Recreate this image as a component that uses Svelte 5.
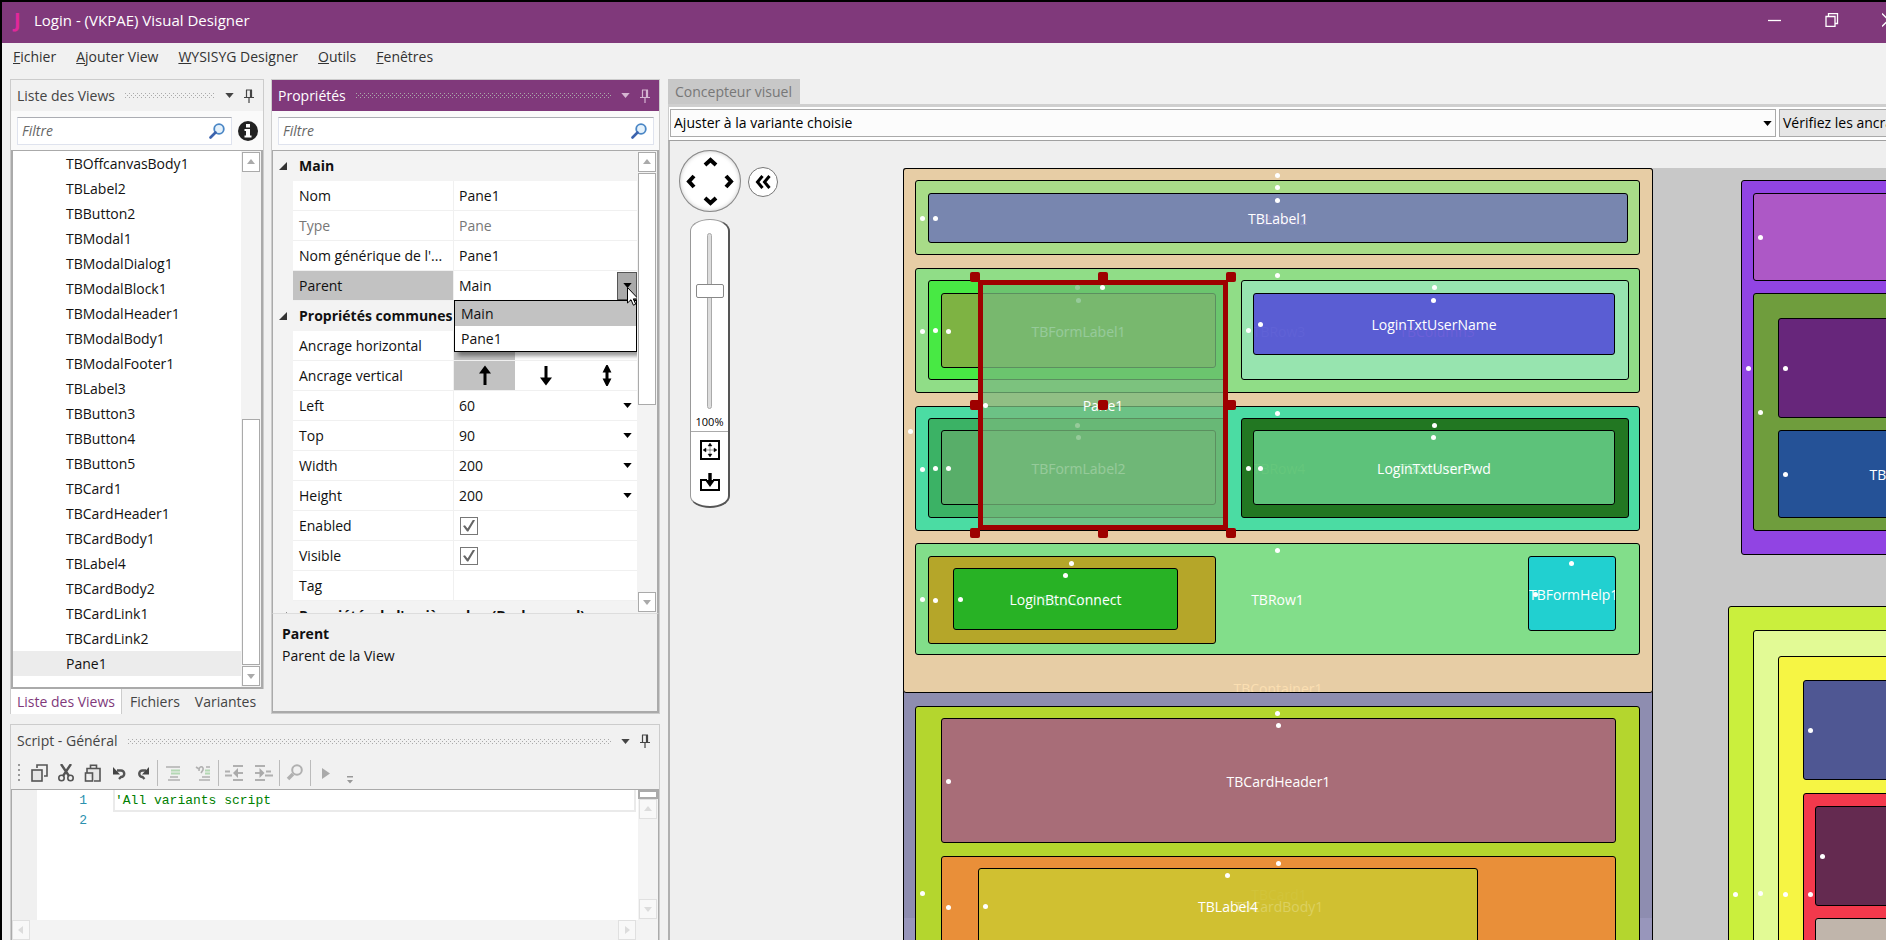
<script>
  const menus = [
    ["F", "ichier"],
    ["A", "jouter View"],
    ["W", "YSISYG Designer"],
    ["O", "utils"],
    ["F", "enêtres"],
  ];

  const views = [
    "TBOffcanvasBody1",
    "TBLabel2",
    "TBButton2",
    "TBModal1",
    "TBModalDialog1",
    "TBModalBlock1",
    "TBModalHeader1",
    "TBModalBody1",
    "TBModalFooter1",
    "TBLabel3",
    "TBButton3",
    "TBButton4",
    "TBButton5",
    "TBCard1",
    "TBCardHeader1",
    "TBCardBody1",
    "TBLabel4",
    "TBCardBody2",
    "TBCardLink1",
    "TBCardLink2",
    "Pane1",
  ];

  let selectedView = $state("Pane1");
  let parent = $state("Main");
  let zoom = $state(69);

  const properties = [
    { group: "Main" },
    { name: "Nom", type: "text", value: "Pane1" },
    { name: "Type", type: "text", value: "Pane", disabled: true },
    { name: "Nom générique de l'...", type: "text", value: "Pane1" },
    { name: "Parent", type: "parent" },
    { group: "Propriétés communes" },
    { name: "Ancrage horizontal", type: "anchorH" },
    { name: "Ancrage vertical", type: "anchorV" },
    { name: "Left", type: "number", value: "60" },
    { name: "Top", type: "number", value: "90" },
    { name: "Width", type: "number", value: "200" },
    { name: "Height", type: "number", value: "200" },
    { name: "Enabled", type: "check" },
    { name: "Visible", type: "check" },
    { name: "Tag", type: "text", value: "" },
    { group: "Propriétés de l'arrière-plan (Background)" },
  ];

  const arrows = {
    Haut: "M10 20V4M10 3l-3 4h6z",
    Bas: "M10 1v16M10 18l-3-4h6z",
    Étirer: "M10 4v13M10 2l-2 4h4zM10 19l-2-4h4z",
  };

  // views on the design surface, back to front: x, y, width, height
  const boxes = [
    { r: [0, 0, 750, 1037], fill: "#8e8db0" },
    { r: [0, 750, 750, 287], fill: "#9896bb", plain: true },
    {
      r: [0, 0, 750, 525],
      fill: "#e7cda5",
      under: [{ t: "TBContainer1", x: 374, y: 520, c: "#fbdfb2" }],
    },
    { r: [12, 12, 725, 75], fill: "#a8dc88" },
    {
      r: [25, 25, 700, 50],
      fill: "#7886af",
      label: "TBLabel1",
      under: [{ t: "TBRow2", x: 352, y: 26, c: "#8f8fc0" }],
    },
    { r: [12, 100, 725, 125], fill: "#90dd87" },
    { r: [25, 112, 300, 100], fill: "#48e944" },
    { r: [38, 125, 275, 75], fill: "#7eb343", label: "TBFormLabel1" },
    { r: [338, 112, 388, 100], fill: "#97e4af" },
    {
      r: [350, 125, 362, 62],
      fill: "#5a5dd3",
      label: "LoginTxtUserName",
      under: [
        { t: "TBRow3", x: 25, y: 38, c: "#6062d6" },
        { t: "TBColumn3", x: 183, y: 38, c: "#6c60d8" },
      ],
    },
    { r: [12, 238, 725, 125], fill: "#4bdca3" },
    { r: [25, 250, 300, 100], fill: "#3bb265" },
    { r: [38, 262, 275, 75], fill: "#58ae69", label: "TBFormLabel2" },
    { r: [338, 250, 388, 100], fill: "#227722" },
    {
      r: [350, 262, 362, 75],
      fill: "#5dc27a",
      label: "LoginTxtUserPwd",
      under: [
        { t: "TBRow4", x: 25, y: 38, c: "#65c77c" },
        { t: "TBColumn5", x: 183, y: 38, c: "#86dca0" },
      ],
    },
    { r: [12, 375, 725, 112], fill: "#82de8a", label: "TBRow1" },
    { r: [25, 388, 288, 88], fill: "#b5a629" },
    {
      r: [50, 400, 225, 62],
      fill: "#28b225",
      label: "LoginBtnConnect",
      under: [{ t: "TBColumn1", x: 118, y: 32, c: "#45c55a" }],
    },
    { r: [625, 388, 88, 75], fill: "#21d0d0", label: "TBFormHelp1" },
    { r: [12, 538, 725, 374], fill: "#b4d62e" },
    { r: [38, 550, 675, 125], fill: "#a86d78", label: "TBCardHeader1" },
    { r: [38, 688, 675, 101], fill: "#e98f39" },
    {
      r: [75, 700, 500, 75],
      fill: "#d0c031",
      label: "TBLabel4",
      under: [
        { t: "TBCard1", x: 300, y: 26, c: "#d2c43a" },
        { t: "TBCardBody1", x: 300, y: 38, c: "#dcd060" },
      ],
    },

    { r: [838, 12, 400, 375], fill: "#9144e3" },
    { r: [850, 25, 400, 88], fill: "#ad58c6" },
    { r: [850, 125, 400, 238], fill: "#6f9d3d" },
    { r: [875, 150, 400, 100], fill: "#67267b" },
    {
      r: [875, 262, 400, 88],
      fill: "#255297",
      under: [{ t: "TB", x: 99, y: 44, c: "#ffffff" }],
    },
    { r: [825, 438, 400, 575], fill: "#caef3d" },
    { r: [850, 462, 400, 525], fill: "#e2fa95" },
    { r: [875, 488, 400, 475], fill: "#f6f544" },
    { r: [900, 512, 400, 100], fill: "#4f5793" },
    { r: [900, 625, 400, 201], fill: "#f3394c" },
    { r: [912, 638, 400, 100], fill: "#642a50" },
    { r: [912, 750, 400, 100], fill: "#c0b5ab" },
  ];

  const handles = [0, 50, 100].flatMap((y) => [0, 50, 100].map((x) => [x, y]));

  const place = ([x, y, w, h]) =>
    `left:${x}px;top:${y}px;width:${w}px;height:${h}px`;
</script>

{#snippet caret()}
  <svg class="caret" viewBox="0 0 10 6" width="10" height="6" aria-hidden="true">
    <path d="M0 0h10L5 6z" fill="currentColor" />
  </svg>
{/snippet}

{#snippet panelHeader(title)}
  <header class="panel-header">
    <h2>{title}</h2>
    <span class="grip"></span>
    <button aria-label="Options">{@render caret()}</button>
    <button aria-label="Épingler">
      <svg viewBox="0 0 10 14" width="10" height="14">
        <path
          d="M2 1h6M2.5 1v7M6.5 1v7M7.5 1v7M0 8.5h10M5 9v5"
          fill="none"
          stroke="currentColor"
          stroke-width="1.2"
        />
      </svg>
    </button>
  </header>
{/snippet}

{#snippet filter(id)}
  <div class="filter">
    <input {id} type="text" placeholder="Filtre" aria-label="Filtre" />
    <svg viewBox="0 0 16 16" width="16" height="16" aria-hidden="true">
      <circle cx="10" cy="6" r="4.8" fill="#e4f1fb" stroke="#4a86c5" stroke-width="1.8" />
      <path d="M6.5 9.5L1.5 14.5" stroke="#3c63ad" stroke-width="2.6" stroke-linecap="round" />
    </svg>
  </div>
{/snippet}

{#snippet scrollButton(label, d)}
  <button class="scroll-button" aria-label={label}>
    <svg viewBox="0 0 10 10" width="10" height="10">
      <path {d} fill="currentColor" />
    </svg>
  </button>
{/snippet}

<div class="window">
  <div class="titlebar">
    <span class="logo">J</span>
    <h1>Login - (VKPAE) Visual Designer</h1>
    <div class="window-buttons">
      <button aria-label="Réduire">
        <svg viewBox="0 0 14 14" width="14" height="14"><path d="M0 7.5h13" /></svg>
      </button>
      <button aria-label="Restaurer">
        <svg viewBox="0 0 14 14" width="14" height="14">
          <path d="M1 3.500h9v10H1zM3.500 3V.5h9v10H10.500" />
        </svg>
      </button>
      <button aria-label="Fermer">
        <svg viewBox="0 0 14 14" width="14" height="14"><path d="M0 .5l13 13M13 .5l-13 13" /></svg>
      </button>
    </div>
  </div>

  <nav class="menubar">
    {#each menus as [key, rest]}
      <button><u>{key}</u>{rest}</button>
    {/each}
  </nav>

  <div class="workspace">
    <div class="left-dock">
      <div class="top-panels">
        <section class="views">
          <div class="panel">
            {@render panelHeader("Liste des Views")}
            <div class="filter-row">
              {@render filter("view-filter")}
              <button class="info" aria-label="Informations">
                <svg viewBox="0 0 20 20" width="20" height="20">
                  <circle cx="10" cy="10" r="10" fill="#222" />
                  <path
                    d="M8 3h4v3.500H8zM6.500 8H12v6.500h1.500V16.500h-7V14.500H8V10H6.500z"
                    fill="#fff"
                  />
                </svg>
              </button>
            </div>
            <div class="list-frame">
              <ul>
                {#each views as view}
                  <li>
                    <button
                      class:selected={view === selectedView}
                      onclick={() => (selectedView = view)}>{view}</button
                    >
                  </li>
                {/each}
              </ul>
              <div class="scrollbar">
                {@render scrollButton("Monter", "M1 7h8L5 2z")}
                <span class="thumb views-thumb"></span>
                {@render scrollButton("Descendre", "M1 3h8L5 8z")}
              </div>
            </div>
          </div>
          <div class="tabs">
            <button class="active">Liste des Views</button>
            <button>Fichiers</button>
            <button>Variantes</button>
          </div>
        </section>

        <section class="panel properties">
          {@render panelHeader("Propriétés")}
          <div class="filter-row">{@render filter("property-filter")}</div>
          <div class="grid-frame">
            <div class="property-grid">
              {#each properties as p, i}
                {#if p.group}
                  <h3>
                    <svg viewBox="0 0 8 8" width="8" height="8" aria-hidden="true">
                      <path d="M8 0v8H0z" fill="#333" />
                    </svg>
                    {p.group}
                  </h3>
                {:else}
                  <div class="row" class:disabled={p.disabled} class:current={p.type === "parent"}>
                    <label for="prop-{i}">{p.name}</label>
                    <div class="value">
                      {#if p.type === "text"}
                        <input id="prop-{i}" type="text" value={p.value} disabled={p.disabled} />
                      {:else if p.type === "number"}
                        <input id="prop-{i}" type="text" value={p.value} />
                        <button class="drop" aria-label="Ouvrir">{@render caret()}</button>
                      {:else if p.type === "check"}
                        <input id="prop-{i}" type="checkbox" checked />
                      {:else if p.type === "parent"}
                        <select id="prop-{i}" bind:value={parent}>
                          <option>Main</option>
                          <option>Pane1</option>
                        </select>
                        <span class="drop pressed">{@render caret()}</span>
                        <ul class="options">
                          <li class:selected={parent === "Main"}>Main</li>
                          <li class:selected={parent === "Pane1"}>Pane1</li>
                        </ul>
                        <svg class="cursor" viewBox="0 0 12 19" width="12" height="19">
                          <path
                            d="M.5.500v15.500l3.500-3.300 2.400 5.500 2.300-1-2.400-5.300h5z"
                            fill="#fff"
                            stroke="#000"
                          />
                        </svg>
                      {:else}
                        {#each Object.entries(arrows) as [name, d], n}
                          <button
                            id={n === 0 ? `prop-${i}` : undefined}
                            class="anchor"
                            class:on={n === 0}
                            aria-label={name}
                          >
                            <svg
                              class:sideways={p.type === "anchorH"}
                              viewBox="0 0 20 21"
                              width="20"
                              height="21"
                            >
                              <path {d} />
                            </svg>
                          </button>
                        {/each}
                      {/if}
                    </div>
                  </div>
                {/if}
              {/each}
            </div>
            <div class="scrollbar">
              {@render scrollButton("Monter", "M1 7h8L5 2z")}
              <span class="thumb properties-thumb"></span>
              {@render scrollButton("Descendre", "M1 3h8L5 8z")}
            </div>
          </div>
          <div class="help">
            <b>Parent</b>
            <p>Parent de la View</p>
          </div>
        </section>
      </div>

      <section class="panel script">
        {@render panelHeader("Script - Général")}
        <div class="toolbar">
          <span class="toolbar-grip"></span>
          <div class="tools">
            <button aria-label="Copier">
              <svg viewBox="0 0 18 18">
                <path class="ink" d="M6 4V1h10v11h-3" />
                <rect class="ink soft" x="1" y="6" width="10" height="11" />
              </svg>
            </button>
            <button aria-label="Couper">
              <svg viewBox="0 0 18 18">
                <path class="ink thick" d="M4 0l8 12M14 0L6 12" />
                <circle class="ink" cx="4.500" cy="14" r="2.700" />
                <circle class="ink" cx="13.500" cy="14" r="2.700" />
              </svg>
            </button>
            <button aria-label="Coller">
              <svg viewBox="0 0 18 18">
                <path class="ink soft" d="M4 9V4.500h13V17H11M7.500 4V1.200h6V4" />
                <rect class="ink" x="2.500" y="9" width="7" height="8" />
              </svg>
            </button>
            <button aria-label="Annuler">
              <svg viewBox="0 0 18 18">
                <path class="ink thick" d="M8 6.500h4a3.200 3.200 0 010 6.500L10 15" />
                <path d="M4 3v7.500h7z" fill="#444" />
              </svg>
            </button>
            <button aria-label="Rétablir">
              <svg viewBox="0 0 18 18">
                <path class="ink thick" d="M11 6.500H7.500a3.200 3.200 0 000 6.500l2 2" />
                <path d="M14 3v7.500H7z" fill="#444" />
              </svg>
            </button>
          </div>
          <div class="tools wide">
            <button aria-label="Commenter" disabled>
              <svg viewBox="0 0 18 18">
                <path class="pale" d="M2 3h4M6 3h10M6 13h8M4 16h12" />
                <path class="green" d="M7 6.500h9M7 9.500h9" />
              </svg>
            </button>
            <button aria-label="Décommenter" disabled>
              <svg viewBox="0 0 18 18">
                <path class="pale" d="M2 3l3 2M5 7c0-6 5-5 4-1L7 9M12 3h4M8 13h8M5 16h11" />
                <path class="green" d="M11 6.500h5M11 9.500h5" />
              </svg>
            </button>
          </div>
          <div class="tools wide">
            <button aria-label="Réduire le retrait" disabled>
              <svg viewBox="0 0 18 18">
                <path class="pale bold" d="M8 2h10M0 7.500h5M0 11.500h7M8 16h10M11 9h7" />
                <path d="M8 9l5-5v10z" fill="#aaa" />
              </svg>
            </button>
            <button aria-label="Augmenter le retrait" disabled>
              <svg viewBox="0 0 18 18">
                <path class="pale bold" d="M0 2h10M11 7.500h5M10 11.500h8M0 16h10M0 9h6" />
                <path d="M9.500 9l-5-5v10z" fill="#aaa" />
              </svg>
            </button>
          </div>
          <div class="tools wide">
            <button aria-label="Rechercher" disabled>
              <svg viewBox="0 0 18 18">
                <circle class="pale bold" cx="11" cy="6" r="4.800" />
                <path class="pale heavy" d="M7 10l-5 5" />
              </svg>
            </button>
          </div>
          <div class="tools wide">
            <button aria-label="Exécuter" disabled>
              <svg viewBox="0 0 18 18"><path d="M5 4l8 5.500L5 15z" fill="#aaa" /></svg>
            </button>
          </div>
          <button class="more" aria-label="Plus">
            <svg viewBox="0 0 6 8" width="6" height="8">
              <path d="M0 0h6v1.500H0zM0 4h6L3 7.500z" fill="#999" />
            </svg>
          </button>
        </div>
        <div class="editor">
          <div class="margin"></div>
          <div class="line-numbers">
            <span>1</span>
            <span>2</span>
          </div>
          <code class="code">
            <span class="line">'All variants script</span>
          </code>
          <div class="scrollbar faded">
            <span class="splitter"></span>
            {@render scrollButton("Monter", "M1 7h8L5 2z")}
            <span class="track"></span>
            {@render scrollButton("Descendre", "M1 3h8L5 8z")}
          </div>
        </div>
        <div class="h-scrollbar faded">
          {@render scrollButton("Gauche", "M7 1v8L2 5z")}
          {@render scrollButton("Droite", "M3 1v8l5-4z")}
        </div>
      </section>
    </div>

    <main class="designer">
      <div class="designer-tabs"><button>Concepteur visuel</button></div>
      <div class="designer-bar">
        <div class="variant">
          <select aria-label="Variante">
            <option>Ajuster à la variante choisie</option>
          </select>
          {@render caret()}
        </div>
        <button class="check-anchors">Vérifiez les ancrages</button>
      </div>

      <div class="canvas">
        <div class="surface">
          {#each boxes as box}
            <div class="box" class:plain={box.plain} style="{place(box.r)};background:{box.fill}">
              {#each box.under ?? [] as u}
                <span class="under" style="left:{u.x}px;top:{u.y}px;color:{u.c}">{u.t}</span>
              {/each}
              <i class="dot top"></i>
              <i class="dot side"></i>
              {#if box.label}<span class="label">{box.label}</span>{/if}
            </div>
          {/each}

          <div class="selection">
            <i class="dot top"></i>
            <i class="dot side"></i>
            <span class="label">Pane1</span>
            <div class="handles">
              {#each handles as [x, y]}
                <i class="handle" style="left:{x}%;top:{y}%"></i>
              {/each}
            </div>
          </div>
        </div>

        <div class="navigator">
          <div class="nav-column">
            <div class="pan">
              <svg viewBox="0 0 62 62" width="62" height="62" aria-hidden="true">
                <path
                  d="M26 15l5.500-5L37 15M26 48l5.500 5L37 48M15 26l-5 5.500L15 37M47 26l5 5.500L47 37"
                  fill="none"
                  stroke="#000"
                  stroke-width="4"
                />
              </svg>
            </div>
            <div class="zoom">
              <input type="range" min="0" max="100" bind:value={zoom} aria-label="Zoom" />
              <span class="zoom-value">100%</span>
              <button aria-label="Ajuster au contenu">
                <svg viewBox="0 0 20 20" width="20" height="20">
                  <rect x="1" y="1" width="18" height="18" fill="#fff" stroke="#000" stroke-width="2" />
                  <path
                    d="M10 5v10M5 10h10M10 3L8 6h4zM10 17l-2-3h4zM3 10l3-2v4zM17 10l-3-2v4z"
                    stroke="#000"
                    stroke-width=".4"
                  />
                </svg>
              </button>
              <button aria-label="Réinitialiser">
                <svg viewBox="0 0 20 20" width="20" height="20">
                  <path d="M7 8H1v10h18V8h-6" fill="none" stroke="#000" stroke-width="2" />
                  <path d="M8.300 1h3.400v7H15l-5 7-5-7h3.300z" />
                </svg>
              </button>
            </div>
          </div>
          <button class="collapse" aria-label="Replier">
            <svg viewBox="0 0 16 14" width="16" height="14">
              <path d="M7.500 1l-5 6 5 6M14.500 1l-5 6 5 6" fill="none" stroke="#000" stroke-width="3" />
            </svg>
          </button>
        </div>
      </div>
    </main>
  </div>
</div>

<style>
  :global(body) {
    margin: 0;
  }

  .window {
    box-sizing: border-box;
    height: 100vh;
    display: flex;
    flex-direction: column;
    overflow: hidden;
    border-top: 2px solid #000;
    border-left: 2px solid #000;
    background: #f1f1f1;
    color: #111;
    font: 14px/20px "Open Sans", sans-serif;
  }

  .window * {
    box-sizing: border-box;
  }

  button,
  input,
  select {
    margin: 0;
    padding: 0;
    border: 0;
    border-radius: 0;
    background: none;
    color: inherit;
    font: inherit;
  }

  h1,
  h2,
  h3,
  p,
  ul {
    margin: 0;
    padding: 0;
    list-style: none;
    font-weight: normal;
  }

  svg {
    display: block;
    flex: none;
  }

  /* title bar and menus */
  .titlebar {
    flex: none;
    height: 41px;
    display: flex;
    align-items: center;
    padding-bottom: 5px;
    background: #80397b;
    color: #fff;
  }

  .logo {
    width: 32px;
    padding-left: 12px;
    color: #e0289b;
    font-size: 20px;
    font-weight: bold;
  }

  h1 {
    flex: 1;
    font-size: 15px;
  }

  .window-buttons {
    display: flex;
    margin-right: -31px;
  }

  .window-buttons button {
    width: 57px;
    height: 36px;
    display: grid;
    place-items: center;
  }

  .window-buttons path {
    fill: none;
    stroke: #fff;
    stroke-width: 1.3;
  }

  .menubar {
    flex: none;
    height: 36px;
    display: flex;
    align-items: flex-start;
    gap: 20px;
    padding: 4px 11px;
    color: #333;
  }

  /* docked panels */
  .workspace {
    flex: 1;
    min-height: 0;
    display: flex;
    gap: 8px;
    padding-left: 8px;
  }

  .left-dock {
    width: 650px;
    flex: none;
    display: flex;
    flex-direction: column;
    gap: 10px;
  }

  .top-panels {
    display: flex;
    gap: 7px;
  }

  .views {
    width: 254px;
  }

  .panel {
    border: 1px solid #ccc;
  }

  .views .panel {
    border-bottom: 0;
    background: #fafafa;
  }

  .properties {
    flex: 1;
    min-width: 0;
    display: flex;
    flex-direction: column;
    background: #fafafa;
  }

  .panel-header {
    height: 31px;
    display: flex;
    align-items: center;
    gap: 8px;
    padding: 0 9px 0 6px;
    background: #f1f1f1;
    color: #444;
  }

  .properties .panel-header {
    background: #80397b;
    color: #fff;
  }

  .properties .panel-header button {
    color: #d5b5d2;
  }

  .panel-header h2 {
    font-size: 14px;
  }

  .grip {
    --dot: conic-gradient(from 0deg at 1px 1px, transparent 270deg, #aaa 0);
    flex: 1;
    height: 5px;
    margin: 0 2px;
    background-image: var(--dot), var(--dot);
    background-size: 4px 4px;
    background-position:
      0 0,
      2px 2px;
  }

  .panel-header button + button {
    margin-left: 2px;
  }

  .filter-row {
    height: 39px;
    display: flex;
    align-items: center;
    gap: 6px;
    padding: 0 5px 0 6px;
  }

  .filter {
    flex: 1;
    min-width: 0;
    height: 28px;
    display: flex;
    align-items: center;
    padding: 0 6px 0 4px;
    border: 1px solid #dfe3ee;
    border-top-color: #abadb3;
    background: #fff;
  }

  .filter input {
    flex: 1;
    min-width: 0;
    font-style: italic;
  }

  .filter input::placeholder {
    color: #666;
    opacity: 1;
  }

  .list-frame {
    display: flex;
    border: 2px solid #aaa;
    border-width: 1px 2px 2px;
    background: #fff;
  }

  .list-frame ul {
    flex: 1;
    padding-bottom: 11px;
  }

  .list-frame li button {
    width: 100%;
    height: 25px;
    display: block;
    padding-left: 53px;
    text-align: left;
  }

  .list-frame .selected {
    background: #ececec;
  }

  .scrollbar {
    width: 20px;
    flex: none;
    display: flex;
    flex-direction: column;
    align-items: center;
    padding: 1px 0;
    background: #f3f3f3;
    color: #aaa;
  }

  .scroll-button {
    width: 18px;
    height: 20px;
    flex: none;
    display: grid;
    place-items: center;
    border: 1px solid #aaa;
    background: #fff;
  }

  .thumb {
    width: 18px;
    border: 1px solid #aaa;
    background: #fff;
  }

  .views-thumb {
    height: 246px;
    margin: auto 0 1px;
  }

  .properties-thumb {
    height: 232px;
    margin: 1px 0 auto;
  }

  .tabs {
    height: 25px;
    display: flex;
    color: #444;
  }

  .tabs button {
    padding: 0 7px 0 8px;
    white-space: nowrap;
  }

  .tabs .active {
    padding: 0 6px;
    border: 1px solid #ccc;
    border-width: 0 1px;
    background: #fff;
    color: #80397b;
  }

  /* property grid */
  .grid-frame {
    display: flex;
    height: 464px;
    border: 1px solid #aaa;
    border-right-width: 2px;
    border-bottom: 1px solid #ddd;
    background: #f3f3f3;
  }

  .property-grid {
    flex: 1;
    min-width: 0;
    overflow: hidden;
    padding-left: 20px;
  }

  h3 {
    height: 30px;
    display: flex;
    align-items: center;
    gap: 12px;
    margin-left: -14px;
    font-size: 14px;
    font-weight: bold;
    line-height: 30px;
    white-space: nowrap;
  }

  .row {
    height: 30px;
    display: flex;
    border-bottom: 1px solid #f0f0f0;
    background: #fff;
  }

  .row label {
    width: 161px;
    flex: none;
    padding-left: 6px;
    border-right: 1px solid #f0f0f0;
    line-height: 30px;
    white-space: nowrap;
  }

  .row.disabled {
    color: #777;
  }

  .current label {
    background: #c2c2c2;
  }

  .value {
    flex: 1;
    min-width: 0;
    position: relative;
    display: flex;
    align-items: center;
  }

  .value input[type="text"],
  .value select {
    flex: 1;
    min-width: 0;
    height: 27px;
    padding-left: 5px;
    appearance: none;
  }

  .drop {
    width: 20px;
    height: 28px;
    display: grid;
    place-items: center;
    color: #000;
  }

  .caret {
    width: 9px;
    height: 5px;
  }

  .pressed {
    border: 1px solid #555;
    background: #aaa;
  }

  .options {
    position: absolute;
    z-index: 2;
    top: 29px;
    left: 0;
    right: 0;
    border: 1px solid #000;
    background: #fff;
    box-shadow: 4px 4px 4px rgb(0 0 0 / 40%);
  }

  .options li {
    height: 25px;
    padding-left: 6px;
    line-height: 25px;
  }

  .options .selected {
    background: #c2c2c2;
  }

  .cursor {
    position: absolute;
    z-index: 3;
    top: 16px;
    right: -2px;
  }

  .value input[type="checkbox"] {
    width: 18px;
    height: 18px;
    margin-left: 6px;
    border: 1px solid #777;
    background: #fff;
    appearance: none;
  }

  .value input[type="checkbox"]:checked::before {
    content: "";
    display: block;
    width: 12px;
    height: 12px;
    margin: 2px;
    background: #666;
    clip-path: polygon(0 55%, 16% 48%, 38% 74%, 84% 0, 100% 6%, 44% 100%, 34% 100%);
  }

  .anchor {
    flex: 1;
    height: 29px;
    display: grid;
    place-items: center;
  }

  .anchor.on {
    background: #c2c2c2;
  }

  .anchor path {
    stroke: #000;
    stroke-width: 3;
  }

  .sideways {
    transform: rotate(-90deg);
  }

  .help {
    flex: 1;
    padding: 10px 9px;
    border: 1px solid #aaa;
    border-width: 0 2px 2px 1px;
    background: #f0f0f0;
  }

  .help p {
    margin-top: 2px;
  }

  /* script panel */
  .script {
    flex: 1;
    min-height: 0;
    display: flex;
    flex-direction: column;
    border-bottom: 0;
  }

  .script .panel-header {
    height: 32px;
    flex: none;
  }

  .toolbar {
    height: 32px;
    flex: none;
    display: flex;
    align-items: center;
    padding-bottom: 1px;
  }

  .toolbar-grip {
    width: 2px;
    height: 18px;
    margin: 0 7px;
    background: repeating-linear-gradient(#999 0 2px, transparent 2px 5px);
  }

  .tools {
    height: 26px;
    display: flex;
    align-items: center;
    border-right: 1px solid #bbb;
  }

  .tools button {
    width: 26px;
    display: grid;
    place-items: center;
  }

  .tools.wide button {
    width: 30px;
  }

  .tools:nth-last-child(2) {
    border-right: 0;
  }

  .tools svg {
    width: 18px;
    height: 18px;
    fill: none;
  }

  .ink {
    stroke: #555;
    stroke-width: 1.6;
  }

  .soft {
    fill: #e6e6e6;
  }

  .thick {
    stroke-width: 2.4;
  }

  .pale {
    stroke: #b0b0b0;
    stroke-width: 1.6;
  }

  .bold {
    stroke-width: 2;
  }

  .heavy {
    stroke-width: 3.5;
  }

  .green {
    stroke: #b4d8b4;
    stroke-width: 2;
  }

  .more {
    align-self: flex-end;
    margin: 0 0 4px 6px;
  }

  .editor {
    flex: 1;
    min-height: 0;
    display: flex;
    border: 2px solid #aaa;
    border-width: 1px 1px 0;
    background: #fff;
    color: #2b91af;
    font: 13px/20px "Liberation Mono", monospace;
  }

  .margin {
    width: 25px;
    background: #f0f0f0;
  }

  .line-numbers {
    width: 50px;
    display: flex;
    flex-direction: column;
    align-items: flex-end;
    padding-top: 1px;
  }

  .code {
    flex: 1;
    margin: 0 2px 0 26px;
    font: inherit;
    color: #008000;
  }

  .line {
    display: block;
    padding-top: 2px;
    border: 2px solid #eaeaea;
    border-top: 0;
    line-height: 18px;
  }

  .splitter {
    width: 20px;
    height: 9px;
    flex: none;
    margin-top: -1px;
    border: 2px solid #aaa;
    background: #fff;
  }

  .track {
    flex: 1;
  }

  .faded {
    color: #dcdcdc;
  }

  .faded .scroll-button {
    border-color: #e0e0e0;
    background: #f8f8f8;
  }

  .h-scrollbar {
    height: 20px;
    flex: none;
    display: flex;
    justify-content: space-between;
    padding-right: 22px;
    border-left: 1px solid #aaa;
    border-right: 1px solid #aaa;
    background: #f3f3f3;
  }

  /* visual designer */
  .designer {
    flex: 1;
    min-width: 0;
    display: flex;
    flex-direction: column;
  }

  .designer-tabs {
    height: 28px;
    flex: none;
    border-bottom: 3px solid #cfcfcf;
  }

  .designer-tabs button {
    height: 25px;
    padding: 0 8px 0 7px;
    background: #c8c8c8;
    color: #777;
  }

  .designer-bar {
    flex: none;
    display: flex;
    gap: 3px;
    padding: 2px 0 3px 1px;
    border-left: 1px solid #ccc;
    background: #fff;
  }

  .variant {
    flex: 1;
    height: 28px;
    display: flex;
    align-items: center;
    padding-right: 3px;
    border: 1px solid #aaa;
    background: #fcfcfc;
    color: #000;
  }

  .variant select {
    flex: 1;
    padding-left: 3px;
    appearance: none;
  }

  .check-anchors {
    width: 107px;
    overflow: hidden;
    padding-left: 3px;
    border: 1px solid #aaa;
    border-right: 0;
    background: #e6e6e6;
    color: #000;
    text-align: left;
    white-space: nowrap;
  }

  .canvas {
    flex: 1;
    min-height: 0;
    position: relative;
    overflow: hidden;
    border-top: 1px solid #a0a0a0;
    border-left: 2px solid #b0b0b0;
    background: #efefef;
  }

  .surface {
    position: absolute;
    inset: 27px 0 0 233px;
    background: #c8c8c8;
  }

  .box,
  .selection {
    position: absolute;
    isolation: isolate;
    display: grid;
    place-items: center;
    color: #fff;
    white-space: nowrap;
  }

  .box {
    overflow: hidden;
    border: 1px solid #000;
    border-radius: 3px;
  }

  .plain {
    border-width: 0 1px;
    border-radius: 0;
  }

  .plain .dot {
    display: none;
  }

  .dot {
    position: absolute;
    width: 5px;
    height: 5px;
    border-radius: 50%;
    background: #fff;
  }

  .dot.top {
    top: 4px;
    left: calc(50% - 3px);
  }

  .dot.side {
    top: calc(50% - 2px);
    left: 4px;
  }

  .under {
    position: absolute;
    transform: translate(-50%, -50%);
  }

  .label {
    z-index: 1;
    padding-top: 2px;
  }

  .selection {
    left: 75px;
    top: 112px;
    width: 250px;
    height: 250px;
    border: 5px solid #9e0000;
    background: rgb(118 186 124 / 77%);
    background-clip: padding-box;
  }

  .selection .dot.top {
    top: 0;
  }

  .selection .dot.side {
    left: 0;
  }

  .handles {
    position: absolute;
    z-index: 2;
    inset: -8px;
  }

  .handle {
    position: absolute;
    width: 10px;
    height: 10px;
    margin: -5px;
    border-radius: 2px;
    background: #9e0000;
  }

  .navigator {
    position: absolute;
    top: 9px;
    left: 9px;
    display: flex;
    align-items: flex-start;
    gap: 7px;
  }

  .nav-column {
    display: flex;
    flex-direction: column;
    align-items: center;
    gap: 7px;
  }

  .pan {
    border-radius: 50%;
    background: #fff;
    box-shadow:
      inset 0 0 0 1px #888,
      inset 0 0 5px #aaa;
  }

  .zoom {
    width: 40px;
    display: flex;
    flex-direction: column;
    align-items: center;
    padding: 13px 0 14px;
    border: 2px solid #666;
    border-width: 1px 2px 2px 1px;
    border-color: #999 #555 #555 #999;
    border-radius: 20px / 12px;
    background: #fff;
  }

  .zoom input {
    width: 28px;
    height: 176px;
    writing-mode: vertical-lr;
    direction: rtl;
    appearance: none;
  }

  .zoom input::-webkit-slider-runnable-track {
    width: 5px;
    border: 1px solid #aaa;
    border-radius: 3px;
    background: #ddd;
  }

  .zoom input::-webkit-slider-thumb {
    width: 28px;
    height: 14px;
    margin-left: -12px;
    border: 1px solid #888;
    border-radius: 2px;
    background: #fff;
    appearance: none;
  }

  .zoom-value {
    width: 100%;
    padding-top: 4px;
    border-bottom: 1px solid #aaa;
    font-size: 11px;
    line-height: 18px;
    text-align: center;
    color: #000;
  }

  .zoom button {
    margin-top: 8px;
  }

  .zoom button + button {
    margin-top: 12px;
  }

  .collapse {
    width: 30px;
    height: 30px;
    display: grid;
    place-items: center;
    margin-top: 17px;
    border: 1px solid #777;
    border-radius: 50%;
    background: #fff;
  }
</style>
